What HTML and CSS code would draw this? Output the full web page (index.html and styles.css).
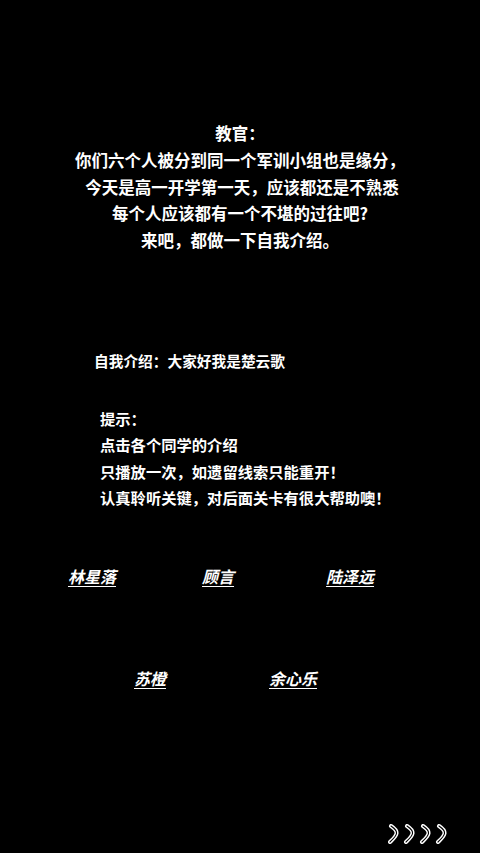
FILE: index.html
```html
<!DOCTYPE html>
<html lang="zh">
<head>
<meta charset="utf-8">
<link rel="stylesheet" href="styles.css">
</head>
<body>
<main class="screen">
  <section class="speech">
    <p class="line">教官：</p>
    <p class="line">你们六个人被分到同一个军训小组也是缘分，</p>
    <p class="line indent">今天是高一开学第一天，应该都还是不熟悉</p>
    <p class="line">每个人应该都有一个不堪的过往吧?</p>
    <p class="line">来吧，都做一下自我介绍。</p>
  </section>
  <section class="intro">自我介绍：大家好我是楚云歌</section>
  <section class="hint">
    <p class="hline">提示：</p>
    <p class="hline">点击各个同学的介绍</p>
    <p class="hline">只播放一次，如遗留线索只能重开！</p>
    <p class="hline">认真聆听关键，对后面关卡有很大帮助噢！</p>
  </section>
  <nav class="names row1">
    <a class="name n1">林星落</a>
    <a class="name n2">顾言</a>
    <a class="name n3">陆泽远</a>
  </nav>
  <nav class="names row2">
    <a class="name n4">苏橙</a>
    <a class="name n5">余心乐</a>
  </nav>
  <footer class="next">
    <svg class="arrows" width="64" height="20" viewBox="0 0 64 20">
      <g fill="none" stroke-linecap="round" stroke-linejoin="round">
        <path class="ch" d="M3 2 C6 4 9 6.5 8.5 9.5 C8 12.5 5 15 2 18"/>
        <path class="ch" d="M19 2 C22 4 25 6.5 24.5 9.5 C24 12.5 21 15 18 18"/>
        <path class="ch" d="M35 2 C38 4 41 6.5 40.5 9.5 C40 12.5 37 15 34 18"/>
        <path class="ch" d="M51 2 C54 4 57 6.5 56.5 9.5 C56 12.5 53 15 50 18"/>
      </g>
      <g fill="none" stroke-linecap="round" stroke-linejoin="round">
        <path class="mid" d="M3 2 C6 4 9 6.5 8.5 9.5 C8 12.5 5 15 2 18"/>
        <path class="mid" d="M19 2 C22 4 25 6.5 24.5 9.5 C24 12.5 21 15 18 18"/>
        <path class="mid" d="M35 2 C38 4 41 6.5 40.5 9.5 C40 12.5 37 15 34 18"/>
        <path class="mid" d="M51 2 C54 4 57 6.5 56.5 9.5 C56 12.5 53 15 50 18"/>
      </g>
    </svg>
  </footer>
</main>
</body>
</html>
```

FILE: styles.css
```css
html, body {
  margin: 0;
  padding: 0;
  background: #000;
}
body {
  font-family: "Noto Sans CJK SC", "Noto Sans", sans-serif;
  color: #fff;
}
.screen {
  width: 480px;
  height: 853px;
  box-sizing: border-box;
  padding-top: 120px;
  display: flex;
  flex-direction: column;
  overflow: hidden;
}
.speech {
  text-align: center;
  font-size: 16.5px;
  font-weight: 700;
  line-height: 26.75px;
}
.line {
  margin: 0;
  white-space: pre;
}
.indent::before {
  content: "\00a0";
}
.intro {
  margin-top: 94px;
  padding-left: 94px;
  font-size: 14.7px;
  font-weight: 700;
  line-height: 26px;
}
.hint {
  margin-top: 31px;
  padding-left: 100px;
  font-size: 15.3px;
  font-weight: 700;
  line-height: 26.5px;
}
.hline {
  margin: 0;
}
.names {
  display: flex;
  align-items: center;
  height: 24px;
}
.row1 {
  margin-top: 53px;
}
.row2 {
  margin-top: 78px;
}
.name {
  font-size: 16px;
  font-weight: 700;
  font-style: italic;
  text-decoration: underline;
  text-underline-offset: 3px;
  line-height: 24px;
  color: #fff;
}
.n1 { margin-left: 68px; }
.n2 { margin-left: 86px; }
.n3 { margin-left: 92px; }
.n4 { margin-left: 134px; }
.n5 { margin-left: 103px; }
.next {
  margin-top: auto;
  margin-bottom: 9px;
  display: flex;
  justify-content: flex-end;
  padding-right: 28px;
}
.arrows {
  display: block;
}
.ch {
  stroke: #fff;
  stroke-width: 4;
}
.mid {
  stroke: #000;
  stroke-width: 1.1;
}
```
